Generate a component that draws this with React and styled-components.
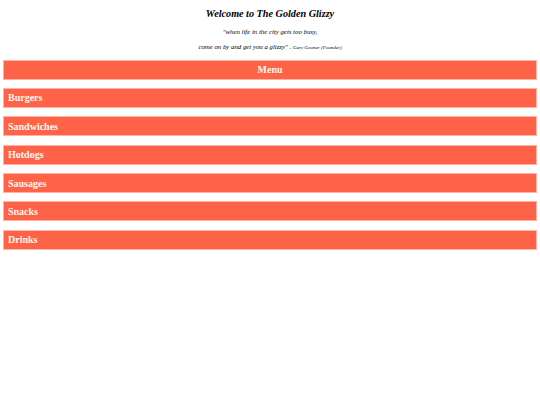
import React from "react";
import styled, { createGlobalStyle } from "styled-components";

const GlobalStyle = createGlobalStyle`
  body {
    margin: 0;
    background: #ffffff;
    font-family: "Liberation Serif", "Times New Roman", serif;
  }
`;

const Page = styled.div`
  padding: 0 3px;
`;

const Header = styled.header`
  text-align: center;
  padding-top: 8px;
`;

const Title = styled.h1`
  margin: 0;
  font-size: 10.2px;
  line-height: 12px;
  font-style: italic;
  font-weight: 700;
  color: #000;
`;

const Quote = styled.p`
  margin: 6.5px 0 0;
  font-size: 6.8px;
  font-style: italic;
  color: #000;
  line-height: 9px;
`;

const Credit = styled.span`
  font-size: 5px;
`;

const Menu = styled.nav`
  display: flex;
  flex-direction: column;
  gap: 8.4px;
  margin-top: 7.5px;
`;

const Bar = styled.div`
  height: 18px;
  display: flex;
  align-items: center;
  justify-content: ${(p) => (p.$center ? "center" : "flex-start")};
  padding: 0 4px;
  background: #ff6347;
  border: 1px solid #ffb3a6;
  color: #fff8f0;
  font-size: 10px;
  font-weight: 700;
`;

const items = ["Burgers", "Sandwiches", "Hotdogs", "Sausages", "Snacks", "Drinks"];

export default function App() {
  return (
    <>
      <GlobalStyle />
      <Page>
        <Header>
          <Title>Welcome to The Golden Glizzy</Title>
          <Quote>"when life in the city gets too busy,</Quote>
          <Quote>
            come on by and get you a glizzy" . <Credit>Gary Gooner (Founder)</Credit>
          </Quote>
        </Header>
        <Menu>
          <Bar $center>Menu</Bar>
          {items.map((item) => (
            <Bar key={item}>{item}</Bar>
          ))}
        </Menu>
      </Page>
    </>
  );
}
